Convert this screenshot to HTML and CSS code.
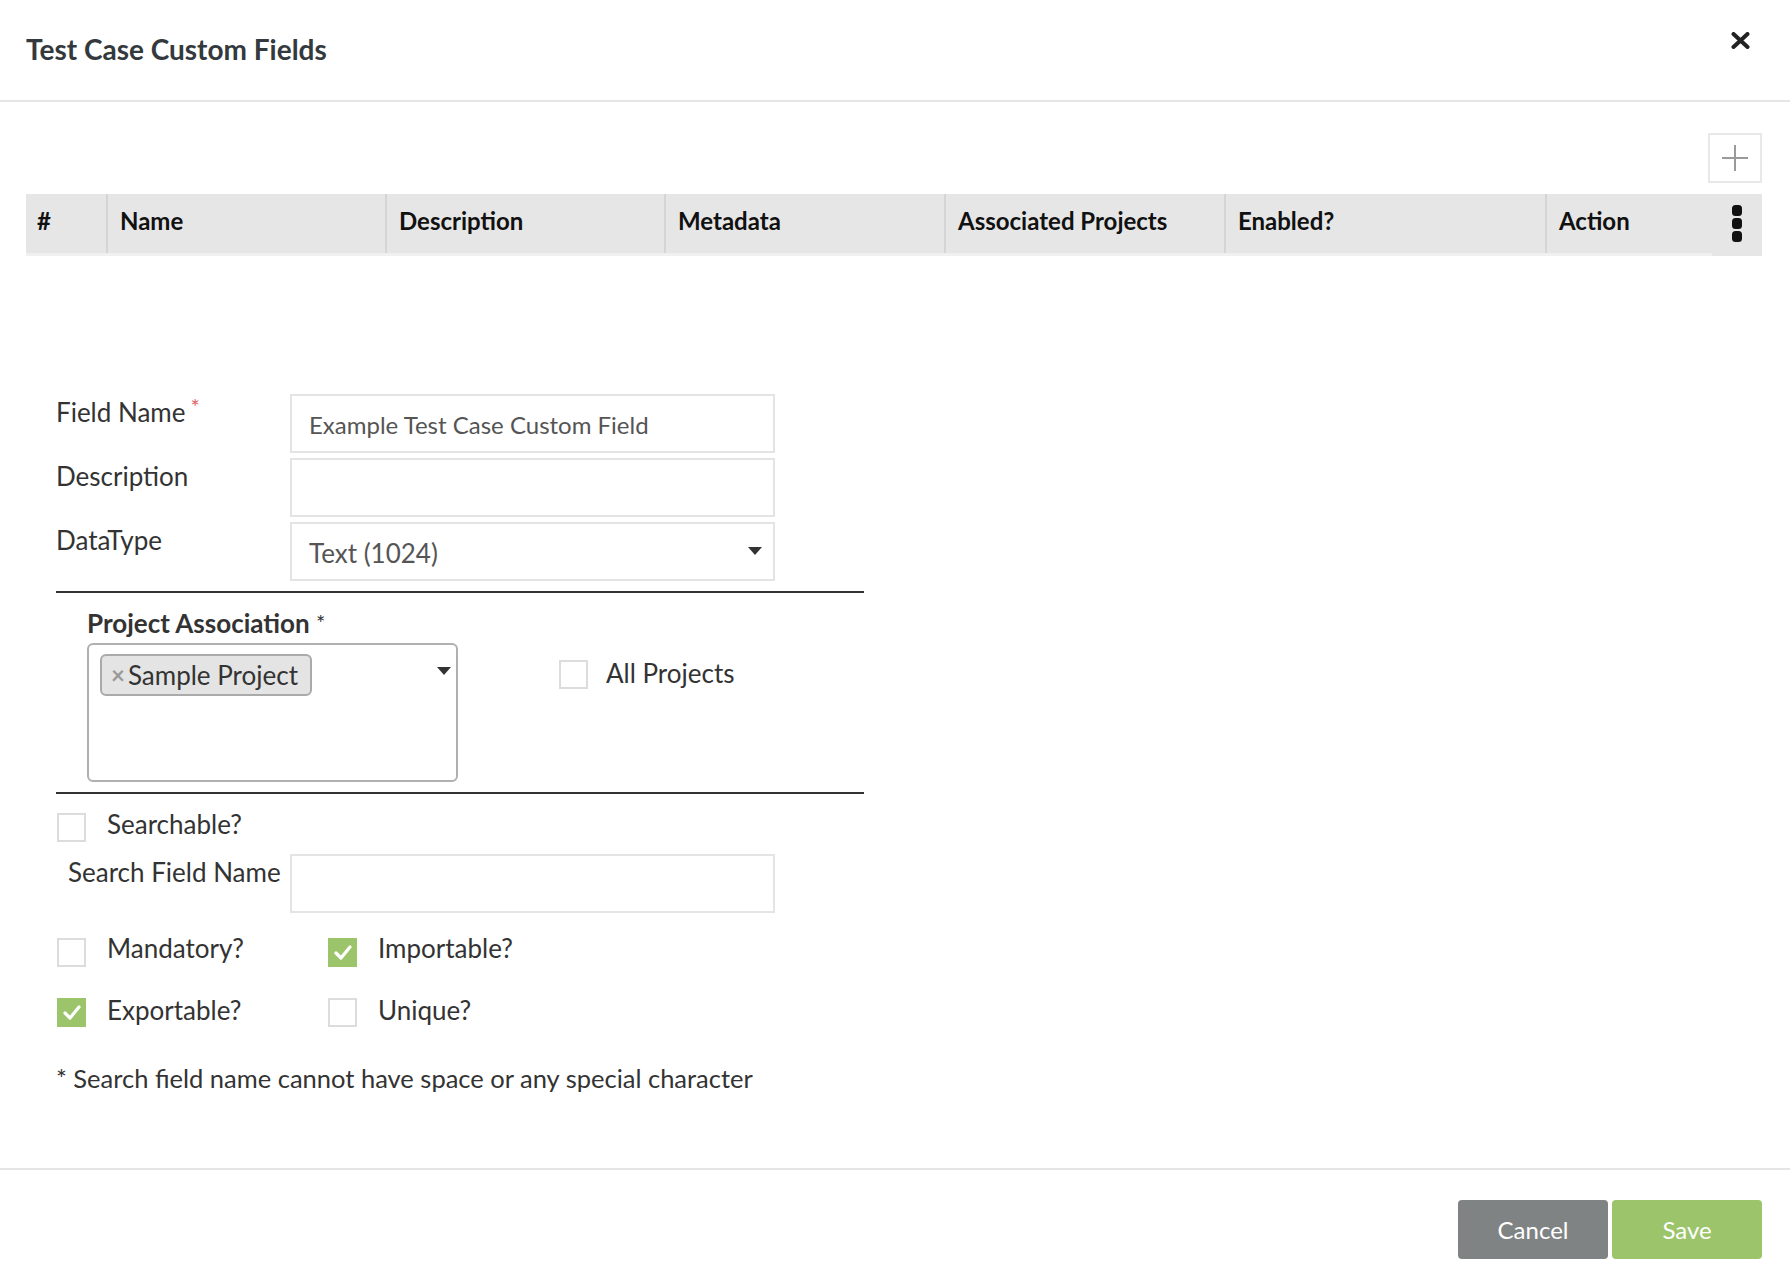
FILE: index.html
```html
<!DOCTYPE html>
<html lang="en">
<head>
<meta charset="utf-8">
<title>Test Case Custom Fields</title>
<link rel="stylesheet" href="styles.css">
</head>
<body>
<div class="modal">
  <header class="modal-header">
    <h1 class="modal-title">Test Case Custom Fields</h1>
    <button class="close-btn" type="button" aria-label="Close">
      <svg width="19" height="17" viewBox="0 0 19 17"><path d="M2.5 2 L16.5 15 M16.5 2 L2.5 15" stroke="#222" stroke-width="4" stroke-linecap="round"/></svg>
    </button>
  </header>

  <main class="modal-body">
    <div class="toolbar">
      <button class="add-btn" type="button" aria-label="Add">
        <svg width="26" height="26" viewBox="0 0 26 26"><path d="M13 0 V26 M0 13 H26" stroke="#9a9a9a" stroke-width="2"/></svg>
      </button>
    </div>

    <div class="grid-head">
      <div class="thead">
        <div class="th">#</div>
        <div class="th">Name</div>
        <div class="th">Description</div>
        <div class="th">Metadata</div>
        <div class="th">Associated Projects</div>
        <div class="th">Enabled?</div>
        <div class="th">Action</div>
      </div>
      <div class="kebab">
        <svg width="10" height="37" viewBox="0 0 10 37"><rect x="0" y="0" width="10" height="11" rx="3.5" fill="#111"/><rect x="0" y="13" width="10" height="11" rx="3.5" fill="#111"/><rect x="0" y="26" width="10" height="11" rx="3.5" fill="#111"/></svg>
      </div>
    </div>

    <form class="form">
      <div class="fields">
        <div class="row">
          <div class="label">Field Name<span class="req">*</span></div>
          <div class="input"><span class="value">Example Test Case Custom Field</span></div>
        </div>
        <div class="row">
          <div class="label">Description</div>
          <div class="input"></div>
        </div>
        <div class="row">
          <div class="label">DataType</div>
          <div class="input select"><span class="select-value">Text (1024)</span><span class="caret"></span></div>
        </div>
      </div>

      <div class="divider"></div>

      <section class="proj">
        <div class="proj-title">Project Association <span class="star">*</span></div>
        <div class="proj-body">
          <div class="multi">
            <span class="tag"><span class="tag-x">×</span>Sample Project</span>
            <span class="caret multi-caret"></span>
          </div>
          <div class="check all-projects">
            <span class="box"></span>
            <span class="check-label">All Projects</span>
          </div>
        </div>
      </section>

      <div class="divider"></div>

      <div class="check searchable">
        <span class="box"></span>
        <span class="check-label">Searchable?</span>
      </div>

      <div class="row search-row">
        <div class="label indent">Search Field Name</div>
        <div class="input"></div>
      </div>

      <div class="options">
        <div class="check top">
          <span class="box"></span>
          <span class="check-label">Mandatory?</span>
        </div>
        <div class="check top">
          <span class="box checked"><svg width="18" height="15" viewBox="0 0 18 15"><path d="M2 8 L7 13 L16 2" fill="none" stroke="#fff" stroke-width="3.2" stroke-linecap="round" stroke-linejoin="round"/></svg></span>
          <span class="check-label">Importable?</span>
        </div>
        <div class="check bottom">
          <span class="box checked"><svg width="18" height="15" viewBox="0 0 18 15"><path d="M2 8 L7 13 L16 2" fill="none" stroke="#fff" stroke-width="3.2" stroke-linecap="round" stroke-linejoin="round"/></svg></span>
          <span class="check-label">Exportable?</span>
        </div>
        <div class="check bottom">
          <span class="box"></span>
          <span class="check-label">Unique?</span>
        </div>
      </div>

      <p class="note">* Search field name cannot have space or any special character</p>
    </form>
  </main>

  <footer class="modal-footer">
    <button class="btn btn-cancel" type="button">Cancel</button>
    <button class="btn btn-save" type="button">Save</button>
  </footer>
</div>
</body>
</html>
```

FILE: styles.css
```css
* { box-sizing: border-box; }
html, body { margin: 0; padding: 0; }
body {
  font-family: Lato, "Liberation Sans", sans-serif;
  color: #333;
  background: #fff;
}
.modal {
  min-height: 100vh;
  display: flex;
  flex-direction: column;
}

/* header */
.modal-header {
  height: 102px;
  border-bottom: 2px solid #e5e5e5;
  display: flex;
  justify-content: space-between;
  align-items: flex-start;
  padding: 0 40px 0 26px;
}
.modal-title {
  margin: 32px 0 0;
  font-size: 28px;
  line-height: 34px;
  font-weight: 700;
  color: #33393c;
}
.close-btn {
  margin-top: 32px;
  width: 19px;
  height: 17px;
  padding: 0;
  border: 0;
  background: none;
  display: block;
}
.close-btn svg { display: block; }

/* body */
.modal-body {
  flex: 1;
  padding: 31px 28px 0 26px;
}
.toolbar {
  display: flex;
  justify-content: flex-end;
}
.add-btn {
  width: 54px;
  height: 50px;
  border: 2px solid #e8e8e8;
  background: #fff;
  padding: 0;
  display: flex;
  align-items: center;
  justify-content: center;
}
.add-btn svg { display: block; }

.grid-head {
  margin-top: 11px;
  display: flex;
  height: 62px;
  background: #e6e6e6;
}
.thead {
  width: 1686px;
  display: grid;
  grid-template-columns: 80px 279px 279px 280px 280px 321px 167px;
  border-bottom: 3px solid #f0f0f0;
}
.th {
  font-size: 24px;
  line-height: 30px;
  font-weight: 700;
  color: #111;
  padding: 12px 0 0 12px;
  border-left: 2px solid #d5d5d5;
}
.th:first-child {
  border-left: 0;
  padding-left: 11px;
}
.kebab {
  width: 50px;
  display: flex;
  justify-content: center;
  padding-top: 11px;
}
.kebab svg { display: block; }

/* form */
.form {
  margin: 138px 0 0 30px;
  width: 808px;
}
.fields {
  display: flex;
  flex-direction: column;
  gap: 5px;
}
.row {
  display: flex;
  align-items: flex-start;
}
.label {
  width: 234px;
  font-size: 26px;
  line-height: 30px;
  padding-top: 3px;
  color: #333;
  white-space: nowrap;
}
.label.indent { padding-left: 12px; }
.req {
  color: #e06666;
  font-size: 22px;
  vertical-align: top;
  position: relative;
  top: -5px;
  margin-left: 5px;
}
.input {
  width: 485px;
  height: 59px;
  border: 2px solid #e4e4e4;
  padding: 14px 17px 0;
  font-size: 26px;
  line-height: 30px;
  color: #555;
  display: flex;
  align-items: flex-start;
  justify-content: space-between;
}
.input .value { font-size: 24px; }
.select { padding-right: 11px; }
.caret {
  width: 0;
  height: 0;
  border-left: 7px solid transparent;
  border-right: 7px solid transparent;
  border-top: 8px solid #333;
  margin-top: 9px;
}
.divider {
  height: 2px;
  background: #333;
  margin-top: 10px;
}

/* project association */
.proj {
  padding: 15px 0 0 31px;
}
.proj-title {
  font-size: 26px;
  line-height: 30px;
  font-weight: 700;
  color: #333;
}
.star {
  font-weight: 400;
  font-size: 22px;
  vertical-align: top;
}
.proj-body {
  margin-top: 5px;
  display: flex;
  align-items: flex-start;
}
.multi {
  width: 371px;
  height: 139px;
  border: 2px solid #b0b0b0;
  border-radius: 6px;
  padding: 9px 5px 0 11px;
  display: flex;
  justify-content: space-between;
  align-items: flex-start;
}
.multi .multi-caret { margin-top: 13px; }
.tag {
  height: 42px;
  width: 212px;
  border: 2px solid #aaa;
  border-radius: 6px;
  background: #e4e4e4;
  font-size: 26px;
  line-height: 30px;
  color: #333;
  display: flex;
  align-items: center;
  padding-left: 9px;
  white-space: nowrap;
}
.tag-x {
  color: #999;
  font-weight: 700;
  font-size: 24px;
  margin-right: 3px;
}

.check {
  display: flex;
  align-items: flex-start;
}
.box {
  width: 29px;
  height: 29px;
  border: 2px solid #dcdcdc;
  background: #fff;
  flex: none;
  display: flex;
  align-items: center;
  justify-content: center;
}
.box.checked {
  background: #9bc46b;
  border-color: #9bc46b;
}
.box svg { display: block; }
.check-label {
  font-size: 26px;
  line-height: 30px;
  margin-left: 21px;
  color: #333;
  white-space: nowrap;
}
.all-projects {
  margin: 17px 0 0 101px;
}
.all-projects .check-label {
  margin-left: 18px;
  margin-top: -2px;
}
.searchable {
  margin: 19px 0 0 1px;
}
.searchable .check-label { margin-top: -4px; }
.search-row { margin-top: 12px; }

.options {
  margin: 25px 0 0 1px;
  display: grid;
  grid-template-columns: 271px auto;
  row-gap: 31px;
}
.check.top .check-label { margin-top: -5px; }
.check.bottom .check-label { margin-top: -3px; }

.note {
  margin: 36px 0 0;
  font-size: 25.5px;
  line-height: 30px;
  color: #333;
}

/* footer */
.modal-footer {
  border-top: 2px solid #e5e5e5;
  padding: 30px 28px 25px;
  display: flex;
  justify-content: flex-end;
  gap: 4px;
}
.btn {
  width: 150px;
  height: 59px;
  border: 0;
  border-radius: 4px;
  color: #fff;
  font-family: Lato, "Liberation Sans", sans-serif;
  font-size: 24px;
  font-weight: 400;
  padding: 0;
}
.btn-cancel { background: #808383; }
.btn-save { background: #9bc46b; }
```
